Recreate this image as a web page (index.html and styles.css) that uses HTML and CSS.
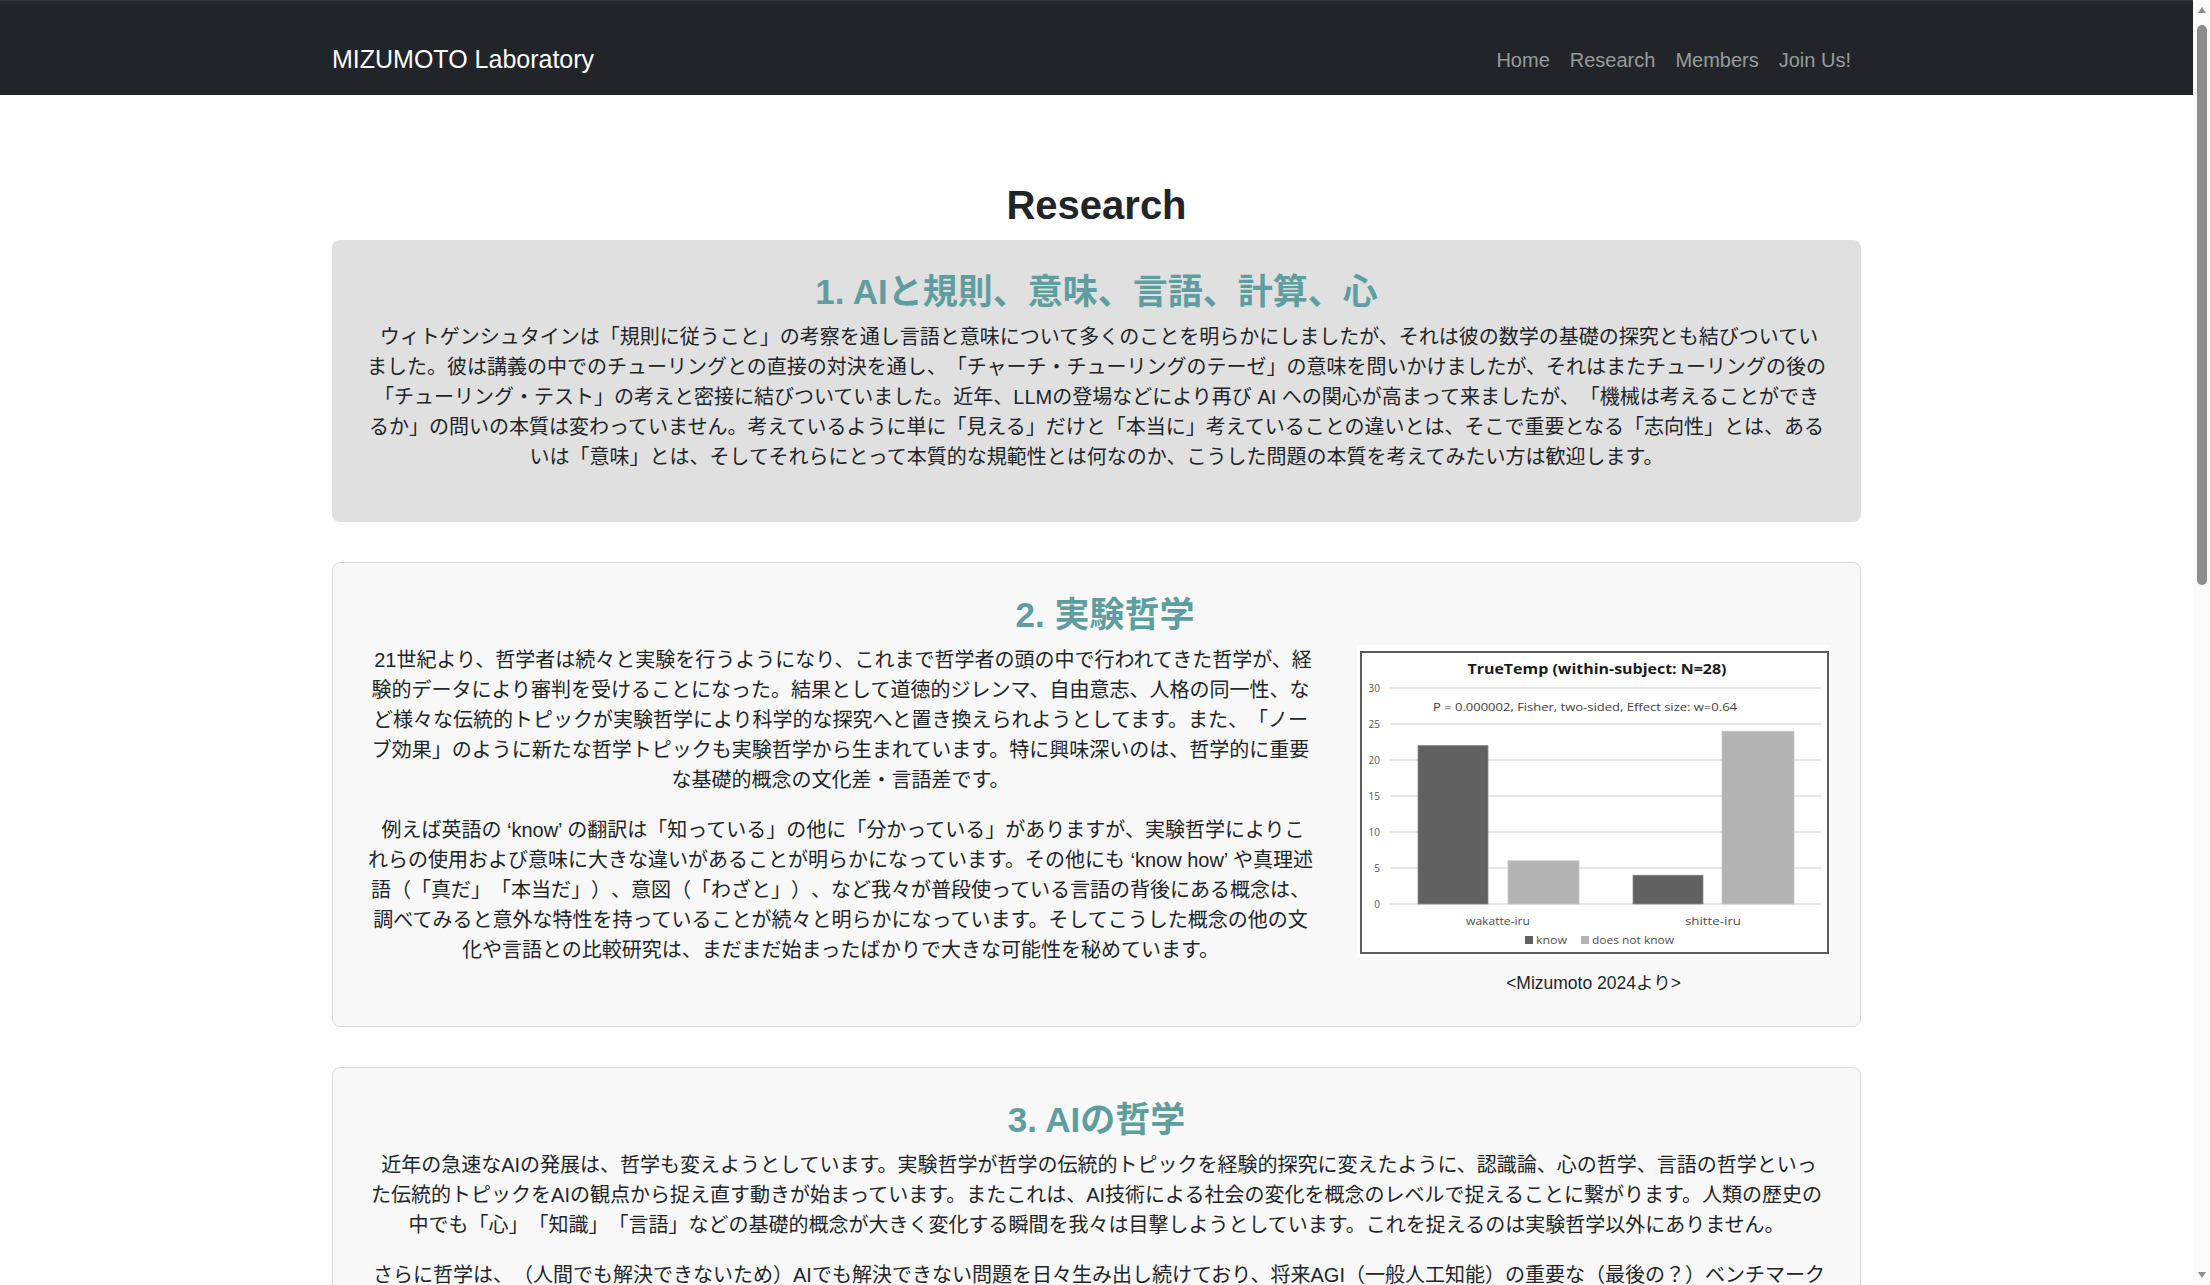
FILE: index.html
```html
<!DOCTYPE html>
<html lang="ja">
<head>
<meta charset="utf-8">
<title>Research | MIZUMOTO Laboratory</title>
<link rel="stylesheet" href="styles.css">
</head>
<body>
<div class="viewport">
<nav class="navbar">
  <div class="container navbar-inner">
    <a class="brand" href="#">MIZUMOTO Laboratory</a>
    <ul class="nav-links">
      <li><a href="#">Home</a></li>
      <li><a href="#">Research</a></li>
      <li><a href="#">Members</a></li>
      <li><a href="#">Join Us!</a></li>
    </ul>
  </div>
</nav>

<main class="container page">
  <h1 class="page-title">Research</h1>

  <section class="card card-highlight">
    <h2 class="card-title">1. AIと規則、意味、言語、計算、心</h2>
    <p class="card-text">ウィトゲンシュタインは「規則に従うこと」の考察を通し言語と意味について多くのことを明らかにしましたが、それは彼の数学の基礎の探究とも結びついていました。彼は講義の中でのチューリングとの直接の対決を通し、「チャーチ・チューリングのテーゼ」の意味を問いかけましたが、それはまたチューリングの後の「チューリング・テスト」の考えと密接に結びついていました。近年、LLMの登場などにより再び AI への関心が高まって来ましたが、「機械は考えることができるか」の問いの本質は変わっていません。考えているように単に「見える」だけと「本当に」考えていることの違いとは、そこで重要となる「志向性」とは、あるいは「意味」とは、そしてそれらにとって本質的な規範性とは何なのか、こうした問題の本質を考えてみたい方は歓迎します。</p>
  </section>

  <section class="card card-split">
    <h2 class="card-title">2. 実験哲学</h2>
    <div class="split">
      <div class="split-text">
        <p class="card-text">21世紀より、哲学者は続々と実験を行うようになり、これまで哲学者の頭の中で行われてきた哲学が、経験的データにより審判を受けることになった。結果として道徳的ジレンマ、自由意志、人格の同一性、など様々な伝統的トピックが実験哲学により科学的な探究へと置き換えられようとしてます。また、「ノーブ効果」のように新たな哲学トピックも実験哲学から生まれています。特に興味深いのは、哲学的に重要な基礎的概念の文化差・言語差です。</p>
        <p class="card-text">例えば英語の ‘know’ の翻訳は「知っている」の他に「分かっている」がありますが、実験哲学によりこれらの使用および意味に大きな違いがあることが明らかになっています。その他にも ‘know how’ や真理述語（「真だ」「本当だ」）、意図（「わざと」）、など我々が普段使っている言語の背後にある概念は、調べてみると意外な特性を持っていることが続々と明らかになっています。そしてこうした概念の他の文化や言語との比較研究は、まだまだ始まったばかりで大きな可能性を秘めています。</p>
      </div>
      <figure class="figure">
        <svg class="chart" width="474" height="312" viewBox="0 0 474 312" role="img" aria-label="TrueTemp chart">
          <rect x="0" y="0" width="474" height="312" fill="#ffffff"/>
          <rect x="4" y="7" width="467" height="301" fill="none" stroke="#5c5c5c" stroke-width="2"/>
          <text class="chart-title" x="240" y="29" text-anchor="middle" textLength="259" lengthAdjust="spacingAndGlyphs">TrueTemp (within-subject: N=28)</text>
          <g stroke="#dedede" stroke-width="1.5">
            <line x1="33" y1="43" x2="464" y2="43"/>
            <line x1="33" y1="79" x2="464" y2="79"/>
            <line x1="33" y1="115" x2="464" y2="115"/>
            <line x1="33" y1="151" x2="464" y2="151"/>
            <line x1="33" y1="187" x2="464" y2="187"/>
            <line x1="33" y1="223" x2="464" y2="223"/>
            <line x1="33" y1="259" x2="464" y2="259"/>
          </g>
          <g class="chart-axis" text-anchor="end">
            <text x="23" y="47">30</text>
            <text x="23" y="83">25</text>
            <text x="23" y="119">20</text>
            <text x="23" y="155">15</text>
            <text x="23" y="191">10</text>
            <text x="23" y="227">5</text>
            <text x="23" y="263">0</text>
          </g>
          <text class="chart-sub" x="228" y="66" text-anchor="middle" textLength="304" lengthAdjust="spacingAndGlyphs">P = 0.000002, Fisher, two-sided, Effect size:  w=0.64</text>
          <rect x="61" y="100.6" width="70" height="158.4" fill="#616161" stroke="#8a8a8a" stroke-width="0.8"/>
          <rect x="151" y="215.8" width="71" height="43.2" fill="#b3b3b3" stroke="#c8c8c8" stroke-width="0.8"/>
          <rect x="276" y="230.2" width="70" height="28.8" fill="#616161" stroke="#8a8a8a" stroke-width="0.8"/>
          <rect x="365" y="86.2" width="72" height="172.8" fill="#b3b3b3" stroke="#c8c8c8" stroke-width="0.8"/>
          <g class="chart-label" text-anchor="middle">
            <text x="141" y="280" textLength="64" lengthAdjust="spacingAndGlyphs">wakatte-iru</text>
            <text x="356" y="280" textLength="56" lengthAdjust="spacingAndGlyphs">shitte-iru</text>
          </g>
          <rect x="168" y="291" width="8" height="8" fill="#616161"/>
          <text class="chart-label" x="179" y="299" textLength="31" lengthAdjust="spacingAndGlyphs">know</text>
          <rect x="224" y="291" width="8" height="8" fill="#b3b3b3"/>
          <text class="chart-label" x="235" y="299" textLength="82" lengthAdjust="spacingAndGlyphs">does not know</text>
        </svg>
        <figcaption class="figure-caption">&lt;Mizumoto 2024より&gt;</figcaption>
      </figure>
    </div>
  </section>

  <section class="card">
    <h2 class="card-title">3. AIの哲学</h2>
    <p class="card-text">近年の急速なAIの発展は、哲学も変えようとしています。実験哲学が哲学の伝統的トピックを経験的探究に変えたように、認識論、心の哲学、言語の哲学といった伝統的トピックをAIの観点から捉え直す動きが始まっています。またこれは、AI技術による社会の変化を概念のレベルで捉えることに繋がります。人類の歴史の中でも「心」「知識」「言語」などの基礎的概念が大きく変化する瞬間を我々は目撃しようとしています。これを捉えるのは実験哲学以外にありません。</p>
    <p class="card-text">さらに哲学は、（人間でも解決できないため）AIでも解決できない問題を日々生み出し続けており、将来AGI（一般人工知能）の重要な（最後の？）ベンチマークとなる可能性があります。こうした新しい問題に一緒に取り組んでみたい方は歓迎します。</p>
  </section>
</main>

<footer class="footer">
  <div class="container footer-inner">© MIZUMOTO Laboratory</div>
</footer>
</div>

<div class="scrollbar" aria-hidden="true">
  <span class="scrollbar-arrow scrollbar-arrow-up"></span>
  <span class="scrollbar-thumb"></span>
  <span class="scrollbar-arrow scrollbar-arrow-down"></span>
</div>
</body>
</html>
```

FILE: styles.css
```css
* {
  box-sizing: border-box;
}

html,
body {
  margin: 0;
  background: #ffffff;
}

body {
  font-family: "Liberation Sans", "Noto Sans CJK JP", sans-serif;
  font-size: 20px;
  line-height: 1.5;
  color: #212529;
  text-spacing-trim: space-all;
}

/* page area, leaving room for the scrollbar strip */
.viewport {
  margin-right: 17px;
}

/* scrollbar strip drawn over the right edge */
.scrollbar {
  position: fixed;
  top: 0;
  right: 0;
  width: 17px;
  height: 100vh;
  background: #fbfbfb;
  display: flex;
  flex-direction: column;
  align-items: center;
}

.scrollbar-arrow {
  width: 0;
  height: 0;
  border-left: 4.5px solid transparent;
  border-right: 4.5px solid transparent;
}

.scrollbar-arrow-up {
  margin-top: 7px;
  border-bottom: 6px solid #8c8c8c;
}

.scrollbar-arrow-down {
  margin-top: auto;
  margin-bottom: 7px;
  border-top: 6px solid #8c8c8c;
}

.scrollbar-thumb {
  margin-top: 12px;
  width: 10px;
  height: 560px;
  border-radius: 5px;
  background: #8c8c8c;
}

.container {
  width: 1529px;
  margin: 0 auto;
}

/* ---------- navbar ---------- */
.navbar {
  background: #212529;
  height: 95px;
  padding-top: 24px;
  border-top: 1px solid #34393e;
}

.navbar-inner {
  display: flex;
  align-items: center;
  justify-content: space-between;
  height: 70px;
}

.brand {
  color: #ffffff;
  font-size: 25px;
  line-height: 1.5;
  text-decoration: none;
}

.nav-links {
  display: flex;
  list-style: none;
  margin: 0;
  padding: 0;
}

.nav-links a {
  display: block;
  padding: 0 10px;
  color: rgba(255, 255, 255, 0.55);
  text-decoration: none;
  font-size: 20px;
  line-height: 1.5;
}

/* ---------- page ---------- */
.page {
  padding-top: 86px;
  min-height: 2700px;
}

.page-title {
  margin: 0 0 11px;
  text-align: center;
  font-size: 40px;
  line-height: 1.2;
  font-weight: 700;
  color: #212529;
}

.card {
  background: #f8f8f8;
  border: 1px solid #dcdcdc;
  border-radius: 8px;
  padding: 31px 35px 30px;
  margin-bottom: 40px;
}

.card-highlight {
  background: #e0e0e0;
  border: none;
  padding: 31px 34px 30px;
}

.card-title {
  margin: 0 0 9px;
  text-align: center;
  font-size: 35px;
  line-height: 1.2;
  font-weight: 700;
  color: #5f9ea0;
}

.card-text {
  margin: 0 0 20px;
  text-align: center;
  text-indent: 5px;
}

/* ---------- split card ---------- */
.card-split {
  padding-left: 34px;
  padding-right: 17px;
}

.split {
  display: grid;
  grid-template-columns: 947px 1fr;
  column-gap: 30px;
}

.figure {
  margin: 0;
  display: flex;
  flex-direction: column;
  align-items: center;
}

.chart {
  display: block;
}

.chart-title {
  font-family: "Open Sans", "Liberation Sans", sans-serif;
  font-weight: 700;
  font-size: 14px;
  fill: #1a1a1a;
}

.chart-sub {
  font-family: "Open Sans", "Liberation Sans", sans-serif;
  font-size: 11.5px;
  fill: #404040;
}

.chart-axis {
  font-family: "Open Sans", "Liberation Sans", sans-serif;
  font-size: 10px;
  fill: #595959;
}

.chart-label {
  font-family: "Open Sans", "Liberation Sans", sans-serif;
  font-size: 11px;
  fill: #505050;
}

.figure-caption {
  margin-top: 13px;
  font-size: 17.5px;
  line-height: 26px;
  text-align: center;
}

/* ---------- footer ---------- */
.footer {
  background: #212529;
  color: rgba(255, 255, 255, 0.55);
  font-size: 16px;
}

.footer-inner {
  padding: 24px 0;
  text-align: center;
}
```
